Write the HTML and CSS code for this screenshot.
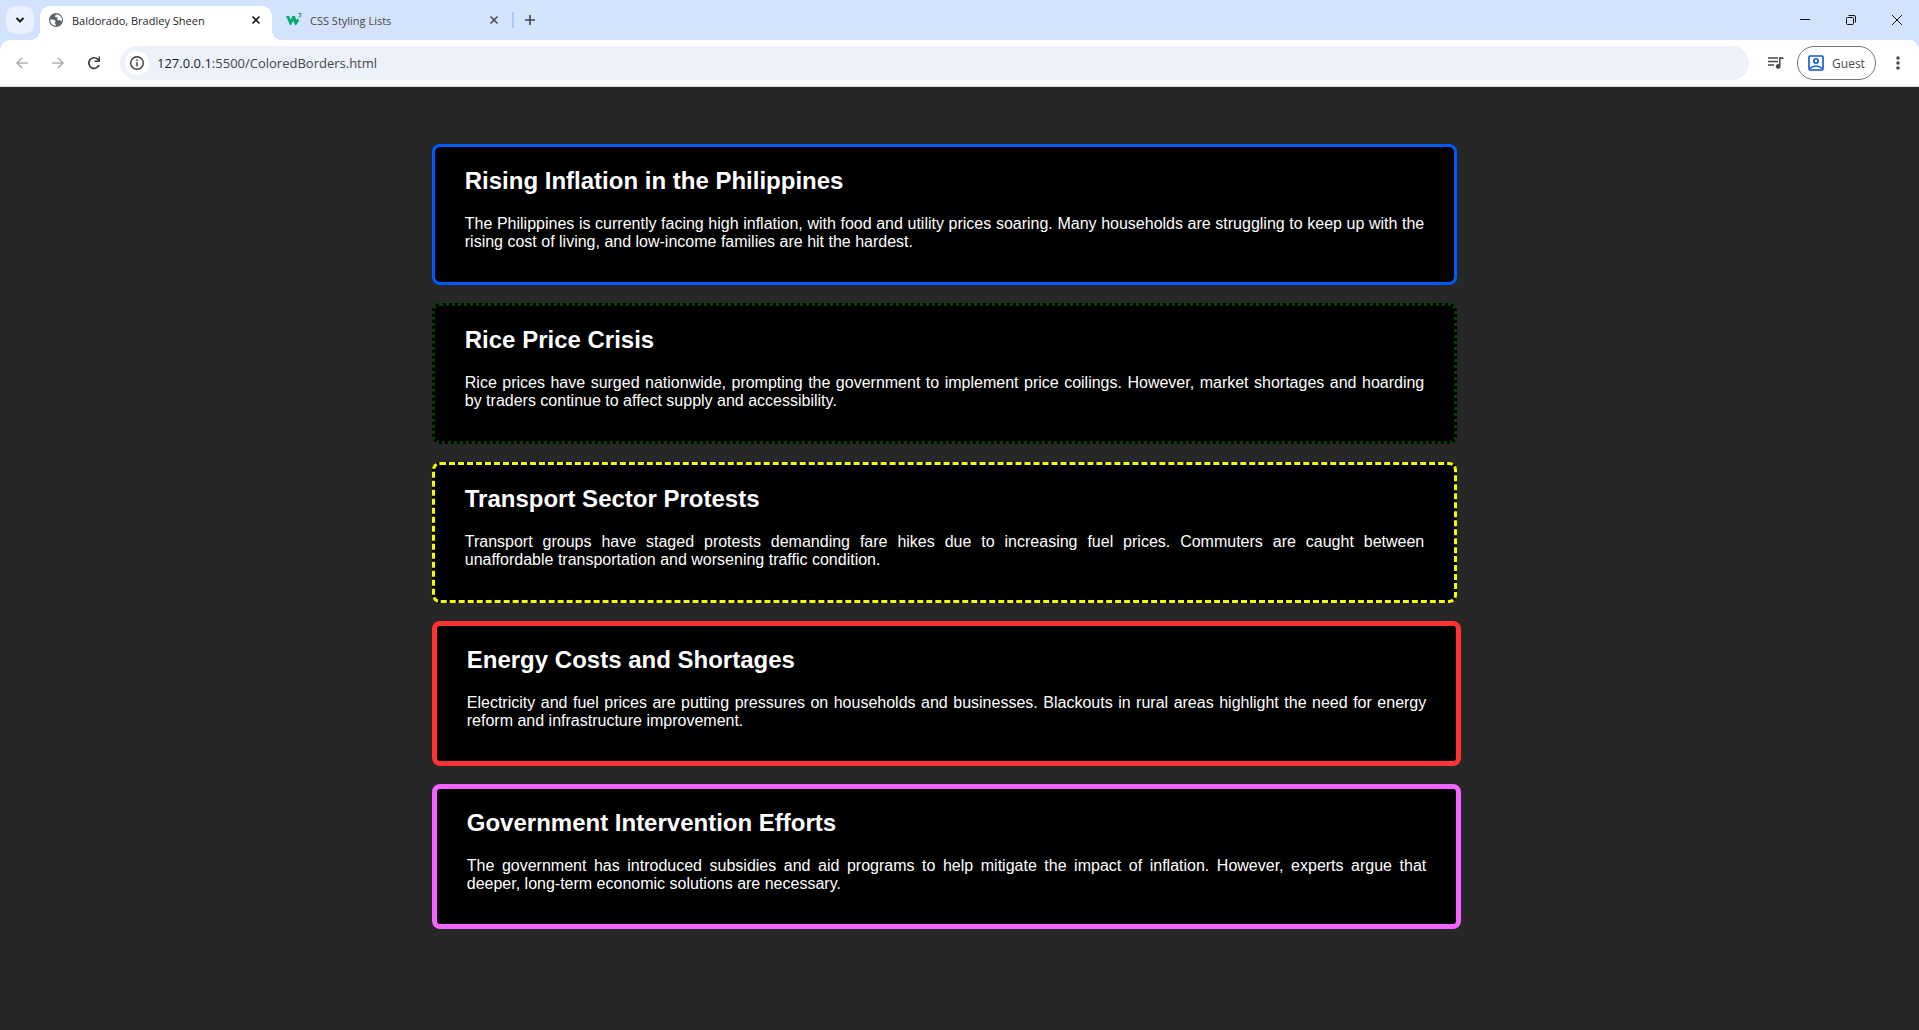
FILE: index.html
```html
<!DOCTYPE html>
<html lang="en">
<head>
<meta charset="utf-8">
<title>Baldorado, Bradley Sheen</title>
<link rel="stylesheet" href="styles.css">
</head>
<body>
<header class="browser">
  <div class="tabstrip">
    <button class="tab-search" type="button" aria-label="Search tabs">
      <svg width="10" height="8" viewBox="0 0 10 8"><path d="M1.500 2l3.500 3.500L8.500 2" fill="none" stroke="#1f1f1f" stroke-width="2"/></svg>
    </button>
    <div class="tab tab-active">
      <svg class="favicon" width="16" height="16" viewBox="0 0 16 16"><circle cx="8" cy="8" r="7" fill="#5f6368"/><path d="M2.300 7.500c2 .2 4.200-.1 5 1.300.7 1.200-.6 1.600-.3 2.600.2.700 1 .8 1 2.300C4.500 13.700 2 11.200 2.300 7.500zM9.500 2.500c-1.800.2-2.700 1-2.400 2 .3.900 1.900.4 2.300 1.300.3.800-.5 1.300.2 2.100.9.900 2.300-.2 3.300.7.700.6.200 1.600.3 2 1.800-3.600.2-7-3.700-8.100z" fill="#fff"/></svg>
      <a class="tab-title" href="#">Baldorado, Bradley Sheen</a>
      <button class="tab-close" type="button" aria-label="Close tab"><svg width="10" height="10" viewBox="0 0 10 10"><path d="M1.500 1.500l7 7M8.500 1.500l-7 7" stroke="#1f1f1f" stroke-width="1.700"/></svg></button>
    </div>
    <div class="tab">
      <svg class="favicon" width="16" height="16" viewBox="0 0 16 16"><path d="M0 4h3.200l1.600 4L6.300 4h2.600l1.500 4 .9-1.600 2 1.900-3 4.700h-1.200L7.200 8.800 5.100 13H4z" fill="#04aa6d"/><path d="M12.600 1.500h2.500l-1.300 1.300c1.700.1 1.400 2.200-.1 2.200-.6 0-1-.2-1.200-.6" fill="none" stroke="#04aa6d" stroke-width="1"/></svg>
      <a class="tab-title" href="#">CSS Styling Lists</a>
      <button class="tab-close" type="button" aria-label="Close tab"><svg width="10" height="10" viewBox="0 0 10 10"><path d="M1.500 1.500l7 7M8.500 1.500l-7 7" stroke="#474747" stroke-width="1.500"/></svg></button>
    </div>
    <span class="tab-divider"></span>
    <button class="new-tab" type="button" aria-label="New tab"><svg width="12" height="12" viewBox="0 0 12 12"><path d="M6 1v10M1 6h10" stroke="#474747" stroke-width="1.600"/></svg></button>
    <div class="window-controls">
      <button type="button" aria-label="Minimize"><svg width="10" height="10" viewBox="0 0 10 10"><path d="M0 4.500h10" stroke="#111"/></svg></button>
      <button type="button" aria-label="Restore"><svg width="10" height="10" viewBox="0 0 10 10" fill="none" stroke="#111"><rect x=".5" y="2.500" width="7" height="7" rx="1"/><path d="M2.500.5H8a1.500 1.500 0 0 1 1.500 1.500v5.500"/></svg></button>
      <button type="button" aria-label="Close"><svg width="10" height="10" viewBox="0 0 10 10"><path d="M0 0l10 10M10 0L0 10" stroke="#111"/></svg></button>
    </div>
  </div>
  <nav class="toolbar">
    <button class="tool" type="button" aria-label="Back"><svg width="16" height="16" viewBox="0 0 16 16" fill="none" stroke="#b1b1b1" stroke-width="1.600"><path d="M14 8H3M8 3L3 8l5 5"/></svg></button>
    <button class="tool" type="button" aria-label="Forward"><svg width="16" height="16" viewBox="0 0 16 16" fill="none" stroke="#b1b1b1" stroke-width="1.600"><path d="M2 8h11M8 3l5 5-5 5"/></svg></button>
    <button class="tool" type="button" aria-label="Reload"><svg width="16" height="16" viewBox="0 0 16 16" fill="none" stroke="#3c3c3c" stroke-width="1.700"><path d="M13.100 10A5.300 5.300 0 1 1 12 4.400l1 1.100"/><path d="M14 1.500V7H8.500V5.500h4V1.500z" fill="#3c3c3c" stroke="none"/></svg></button>
    <div class="address">
      <button class="site-info" type="button" aria-label="Site information"><svg width="16" height="16" viewBox="0 0 16 16"><circle cx="8" cy="8" r="6.300" fill="none" stroke="#3c3c3c" stroke-width="1.400"/><path d="M8 7.200v4M8 4.600v1.500" stroke="#3c3c3c" stroke-width="1.500"/></svg></button>
      <a class="url" href="#"><span class="host">127.0.0.1</span>:5500/ColoredBorders.html</a>
    </div>
    <button class="tool media" type="button" aria-label="Media controls"><svg width="16" height="14" viewBox="0 0 16 14"><path d="M0 2h10M0 5.500h10M0 9h6" stroke="#474747" stroke-width="1.700"/><path d="M11 1.200h4.500V3h-3v7.500a2.300 2.300 0 1 1-1.500-2.200z" fill="#474747"/></svg></button>
    <button class="guest" type="button"><svg width="16" height="16" viewBox="0 0 16 16" fill="none" stroke="#0b57d0" stroke-width="1.600"><rect x="1" y="1" width="14" height="14" rx="1"/><circle cx="8" cy="6" r="2.200"/><path d="M2 13.500c3.300-3.300 8.700-3.300 12 0"/></svg>Guest</button>
    <button class="tool menu" type="button" aria-label="Menu"><svg width="4" height="16" viewBox="0 0 4 16" fill="#474747"><circle cx="2" cy="3" r="1.700"/><circle cx="2" cy="8" r="1.700"/><circle cx="2" cy="13" r="1.700"/></svg></button>
  </nav>
</header>
<main class="page">
  <article class="card card-blue">
    <h2>Rising Inflation in the Philippines</h2>
    <p>The Philippines is currently facing high inflation, with food and utility prices soaring. Many households are struggling to keep up with the rising cost of living, and low-income families are hit the hardest.</p>
  </article>
  <article class="card card-green">
    <h2>Rice Price Crisis</h2>
    <p>Rice prices have surged nationwide, prompting the government to implement price coilings. However, market shortages and hoarding by traders continue to affect supply and accessibility.</p>
  </article>
  <article class="card card-yellow">
    <h2>Transport Sector Protests</h2>
    <p>Transport groups have staged protests demanding fare hikes due to increasing fuel prices. Commuters are caught between unaffordable transportation and worsening traffic condition.</p>
  </article>
  <article class="card card-red">
    <h2>Energy Costs and Shortages</h2>
    <p>Electricity and fuel prices are putting pressures on households and businesses. Blackouts in rural areas highlight the need for energy reform and infrastructure improvement.</p>
  </article>
  <article class="card card-violet">
    <h2>Government Intervention Efforts</h2>
    <p>The government has introduced subsidies and aid programs to help mitigate the impact of inflation. However, experts argue that deeper, long-term economic solutions are necessary.</p>
  </article>
</main>
</body>
</html>
```
FILE: styles.css
```css
body {
  margin: 0;
  min-height: 100vh;
  display: flex;
  flex-direction: column;
  background: #272727;
  font-family: "Liberation Sans", Arial, sans-serif;
}

button {
  display: flex;
  align-items: center;
  justify-content: center;
  padding: 0;
  border: 0;
  background: none;
  font: inherit;
  color: inherit;
}

a {
  color: inherit;
  text-decoration: none;
}

svg {
  flex: none;
}

/* Browser window */
.browser {
  background: #d3e3fd;
  font-family: "Open Sans", "Noto Sans", sans-serif;
  font-size: 12px;
  color: #474747;
}

.tabstrip {
  display: flex;
  align-items: center;
  height: 40px;
  padding-left: 6px;
}

.tab-search {
  width: 28px;
  height: 28px;
  margin-right: 6px;
  border-radius: 10px;
  background: #e9f1fe;
}

.tab {
  display: flex;
  align-items: center;
  gap: 8px;
  box-sizing: border-box;
  width: 240px;
  height: 34px;
  padding: 0 11px 0 14px;
}

.tab-active {
  position: relative;
  align-self: flex-end;
  width: 232px;
  padding: 0 9px 6px 8px;
  border-radius: 10px 10px 0 0;
  background: #fff;
  color: #1f1f1f;
}

.tab-active::before,
.tab-active::after {
  content: "";
  position: absolute;
  bottom: 0;
  width: 10px;
  height: 10px;
}

.tab-active::before {
  right: 100%;
  background: radial-gradient(circle at 0 0, transparent 10px, #fff 10px);
}

.tab-active::after {
  left: 100%;
  background: radial-gradient(circle at 100% 0, transparent 10px, #fff 10px);
}

.tab-title {
  flex: 1;
  white-space: nowrap;
  font-size: 11px;
}

.tab-close {
  width: 14px;
  height: 16px;
}

.tab-divider {
  width: 2px;
  height: 16px;
  background: #a8c7fa;
}

.new-tab {
  width: 32px;
  height: 28px;
}

.window-controls {
  display: flex;
  gap: 2px;
  margin-left: auto;
}

.window-controls button {
  width: 44px;
  height: 40px;
}

.toolbar {
  display: flex;
  align-items: center;
  height: 46px;
  padding: 0 3px 0 4px;
  border-bottom: 1px solid #dcdcdc;
  border-radius: 10px 10px 0 0;
  background: #fff;
}

.tool {
  width: 36px;
  height: 34px;
}

.address {
  flex: 1;
  display: flex;
  align-items: center;
  gap: 8px;
  height: 34px;
  margin-left: 8px;
  padding-left: 5px;
  border-radius: 17px;
  background: #ecf1fa;
}

.site-info {
  width: 24px;
  height: 24px;
  border-radius: 12px;
  background: #fff;
}

.url {
  font-size: 13px;
}

.host {
  color: #1f1f1f;
}

.media {
  margin: 0 3px 0 9px;
}

.guest {
  gap: 8px;
  box-sizing: border-box;
  width: 79px;
  height: 34px;
  border: 1px solid #747775;
  border-radius: 17px;
}

.menu {
  margin-left: 4px;
}

/* News cards */
.page {
  flex: 1;
  padding: 57px 0 57px 22.5%;
}

.card {
  width: 50vw;
  margin-bottom: 18px;
  padding: 0 30px 15px;
  border-radius: 8px;
  background: #000;
  color: #fff;
  display: flow-root;
}

.card h2 {
  margin: 20px 0 21px;
  line-height: 27px;
}

.card p {
  line-height: 18px;
  text-align: justify;
}

.card-blue {
  border: 3px solid #0059ff;
}

.card-green {
  border: 3px dotted #004000;
}

.card-yellow {
  border: 3px dashed #f2ff00;
}

.card-red {
  border: 5px solid #ff3333;
}

.card-violet {
  border: 5px solid #f266ff;
}
```
